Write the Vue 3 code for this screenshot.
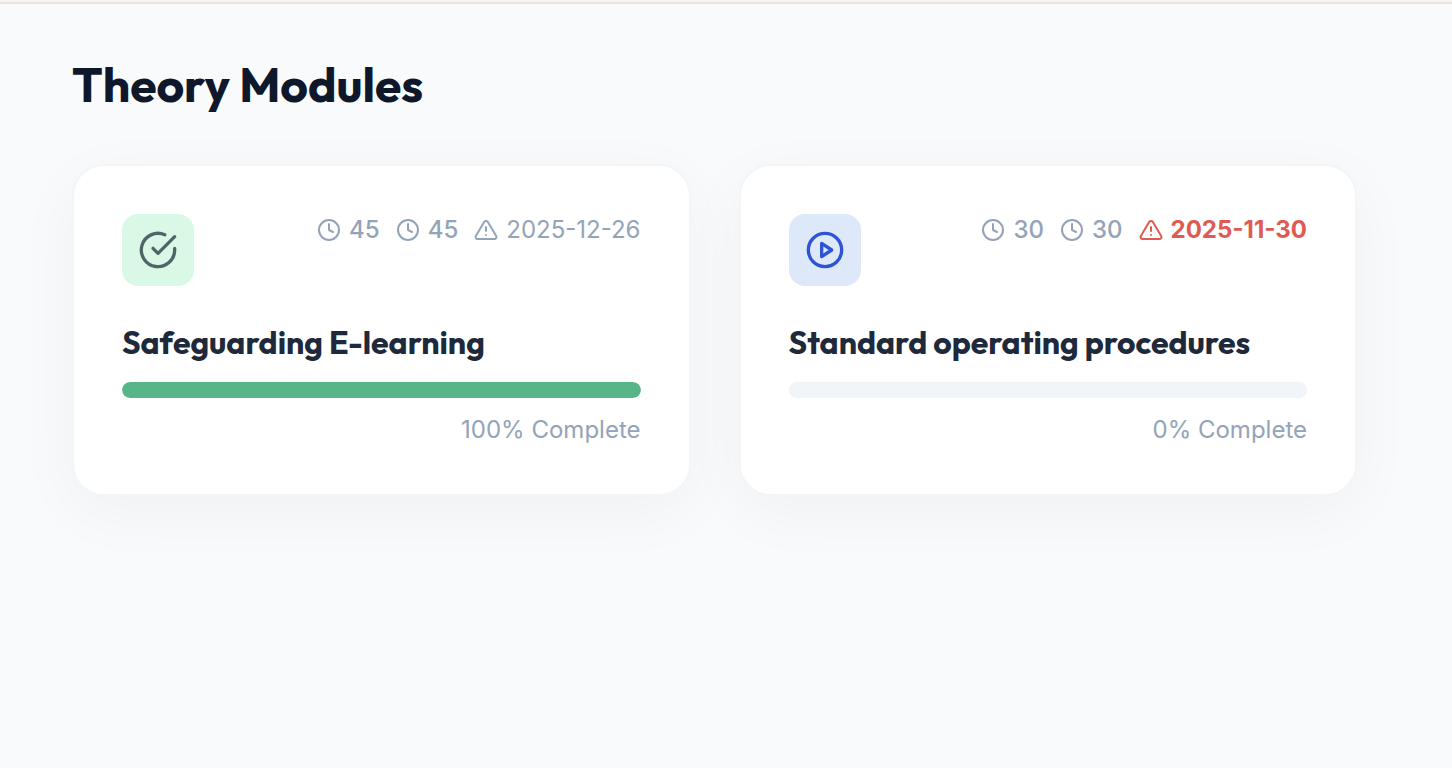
<template>
  <div class="page">
    <div class="topbar"></div>

    <main>
      <h1>Theory Modules</h1>

      <div class="modules">
        <article v-for="mod in modules" :key="mod.title" class="card">
          <div class="card-top">
            <div class="status" :class="{ done: mod.progress === 100 }">
              <svg v-if="mod.progress === 100" viewBox="0 0 24 24">
                <path d="M22 11.08V12a10 10 0 1 1-5.93-9.14" />
                <polyline points="22 4 12 14.01 9 11.01" />
              </svg>
              <svg v-else viewBox="0 0 24 24">
                <circle cx="12" cy="12" r="10" />
                <polygon points="10 8 16 12 10 16 10 8" />
              </svg>
            </div>

            <div class="meta">
              <span v-for="(minutes, i) in mod.times" :key="i" class="meta-item time">
                <svg viewBox="0 0 24 24">
                  <circle cx="12" cy="12" r="10" />
                  <polyline points="12 6 12 12 16 14" />
                </svg>
                {{ minutes }}
              </span>
              <span class="meta-item" :class="{ overdue: mod.overdue }">
                <svg viewBox="0 0 24 24">
                  <path
                    d="M10.29 3.86L1.82 18a2 2 0 0 0 1.71 3h16.94a2 2 0 0 0 1.71-3L13.71 3.86a2 2 0 0 0-3.42 0z"
                  />
                  <line x1="12" y1="9" x2="12" y2="13" />
                  <line x1="12" y1="17" x2="12.01" y2="17" />
                </svg>
                {{ mod.due }}
              </span>
            </div>
          </div>

          <h2>{{ mod.title }}</h2>
          <div class="progress">
            <div class="progress-fill" :style="{ width: mod.progress + '%' }"></div>
          </div>
          <p>{{ mod.progress }}% Complete</p>
        </article>
      </div>
    </main>
  </div>
</template>

<script setup>
import { ref } from 'vue'

const modules = ref([
  {
    title: 'Safeguarding E-learning',
    times: [45, 45],
    due: '2025-12-26',
    overdue: false,
    progress: 100,
  },
  {
    title: 'Standard operating procedures',
    times: [30, 30],
    due: '2025-11-30',
    overdue: true,
    progress: 0,
  },
])
</script>

<style>
body {
  margin: 0;
  background: #f9fafc;
}
</style>

<style scoped>
* {
  box-sizing: border-box;
  margin: 0;
}

.page {
  min-height: 100vh;
  font-family: Inter, 'Liberation Sans', sans-serif;
  color: #94a3b8;
}

.topbar {
  height: 4px;
  background: #f3f5f6;
  border-bottom: 2px solid #efe3d5;
}

main {
  padding: 48px 95px 48px 72px;
}

h1,
h2 {
  font-family: Outfit, Lato, sans-serif;
  font-weight: 700;
}

h1 {
  margin-bottom: 48px;
  font-size: 48px;
  line-height: 64px;
  color: #0f172a;
}

.modules {
  display: grid;
  grid-template-columns: 1fr 1fr;
  gap: 48px;
}

.card {
  padding: 48px;
  background: #fff;
  border: 2px solid #f3f6f9;
  border-radius: 32px;
  box-shadow: 0 16px 64px rgba(0, 0, 0, 0.04);
}

.card-top {
  display: flex;
  justify-content: space-between;
  align-items: flex-start;
  margin-bottom: 36px;
}

svg {
  flex: none;
  fill: none;
  stroke: currentColor;
  stroke-width: 2;
  stroke-linecap: round;
  stroke-linejoin: round;
}

.status {
  display: flex;
  align-items: center;
  justify-content: center;
  width: 72px;
  height: 72px;
  border-radius: 16px;
  background: #dde8f9;
  color: #2f54d3;
}

.status.done {
  background: #d9f9e6;
  color: #50656a;
}

.status svg {
  width: 40px;
  height: 40px;
}

.meta {
  display: flex;
  gap: 16px;
}

.meta-item {
  display: flex;
  align-items: center;
  gap: 8px;
  font-size: 24px;
  line-height: 32px;
  white-space: nowrap;
}

.meta-item svg {
  width: 24px;
  height: 24px;
}

.time {
  font-weight: 500;
}

.overdue {
  font-weight: 700;
  color: #df5b52;
}

h2 {
  margin-bottom: 20px;
  font-size: 32px;
  line-height: 40px;
  color: #1e293b;
}

.progress {
  height: 16px;
  margin-bottom: 16px;
  overflow: hidden;
  border-radius: 8px;
  background: #f1f5f9;
}

.progress-fill {
  height: 100%;
  border-radius: 8px;
  background: #56b687;
}

p {
  font-size: 24px;
  line-height: 32px;
  text-align: right;
}
</style>
